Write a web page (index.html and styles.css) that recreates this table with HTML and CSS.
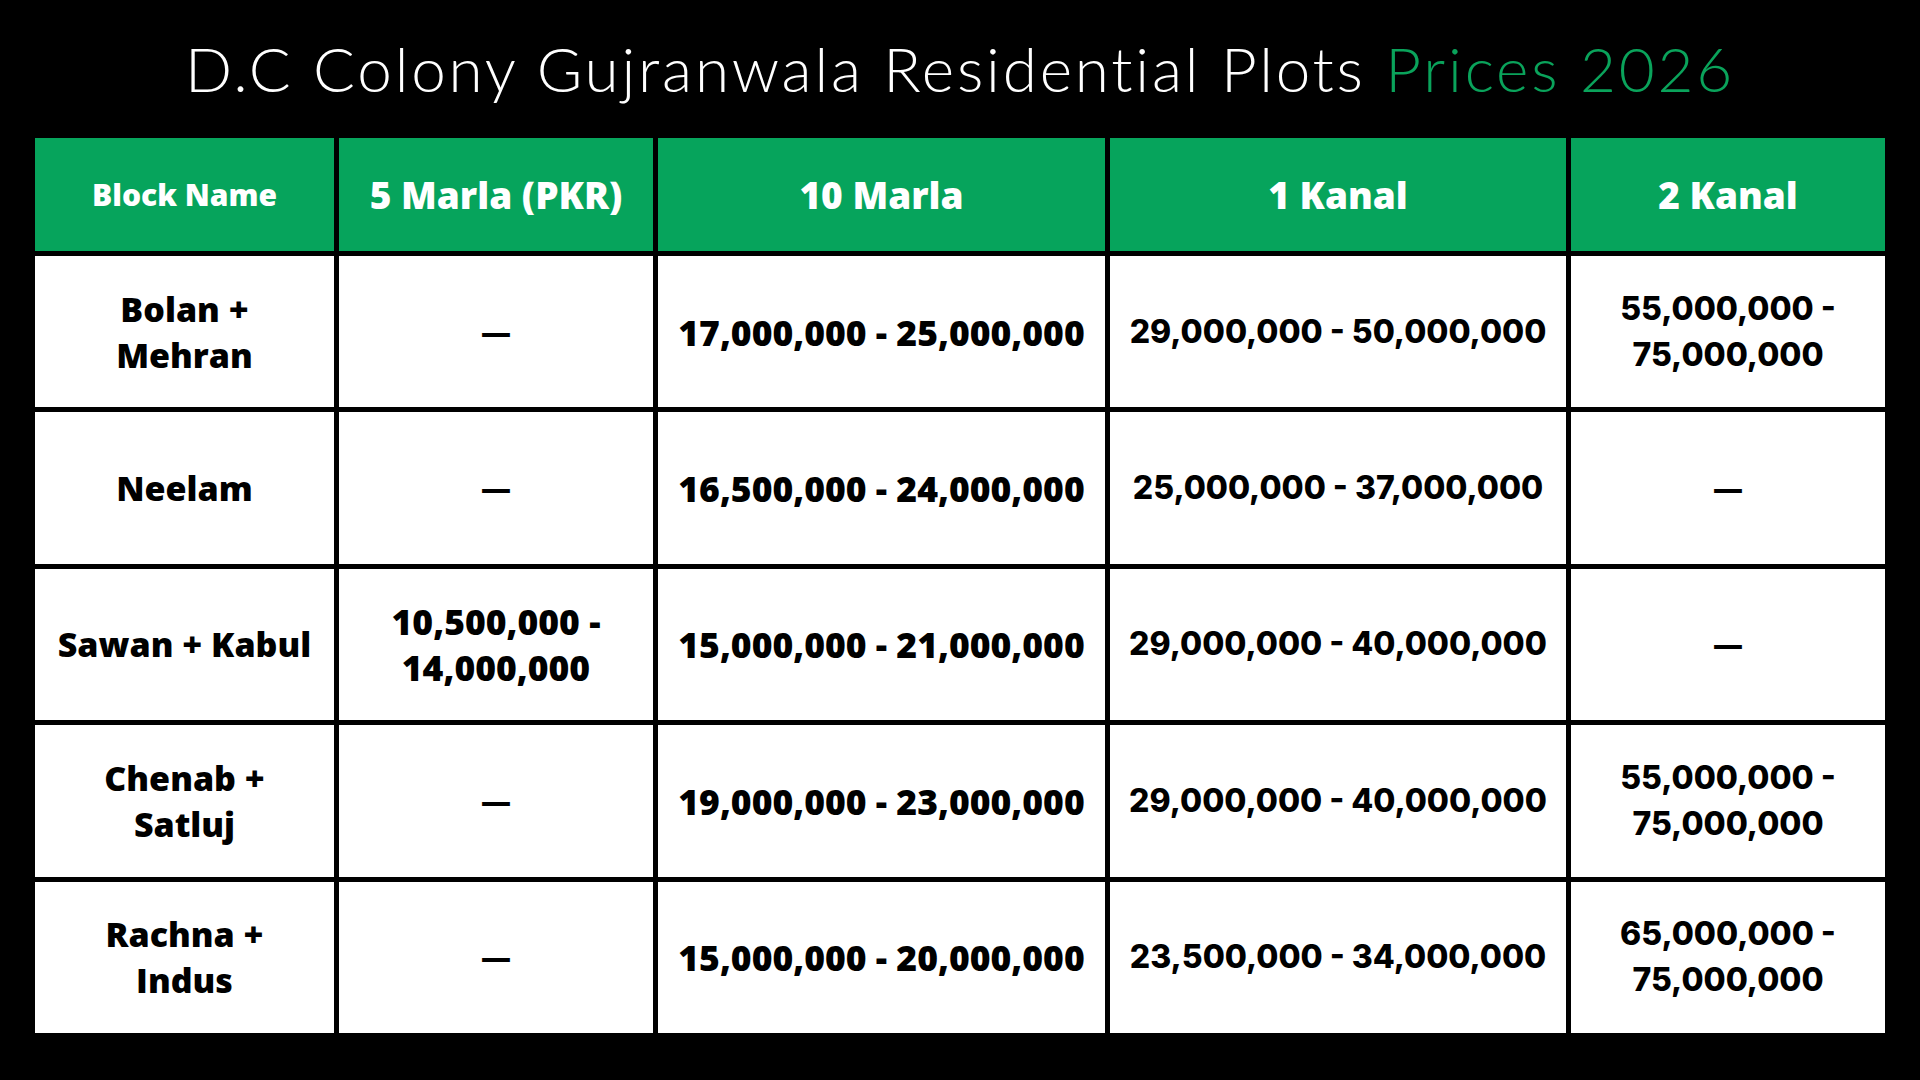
FILE: index.html
```html
<!DOCTYPE html>
<html lang="en">
<head>
<meta charset="utf-8">
<title>D.C Colony Gujranwala Residential Plots Prices 2026</title>
<link rel="stylesheet" href="styles.css">
</head>
<body>
<main class="page">
  <h1 class="title">D.C Colony Gujranwala Residential Plots <span class="accent">Prices 2026</span></h1>
  <div class="table">
    <div class="cell head head-sm">Block Name</div>
    <div class="cell head">5 Marla (PKR)</div>
    <div class="cell head">10 Marla</div>
    <div class="cell head">1 Kanal</div>
    <div class="cell head">2 Kanal</div>

    <div class="cell">Bolan +<br>Mehran</div>
    <div class="cell dash">—</div>
    <div class="cell num">17,000,000 - 25,000,000</div>
    <div class="cell alt">29,000,000 - 50,000,000</div>
    <div class="cell alt">55,000,000 -<br>75,000,000</div>

    <div class="cell">Neelam</div>
    <div class="cell dash">—</div>
    <div class="cell num">16,500,000 - 24,000,000</div>
    <div class="cell alt">25,000,000 - 37,000,000</div>
    <div class="cell dash">—</div>

    <div class="cell">Sawan + Kabul</div>
    <div class="cell num">10,500,000 -<br>14,000,000</div>
    <div class="cell num">15,000,000 - 21,000,000</div>
    <div class="cell alt">29,000,000 - 40,000,000</div>
    <div class="cell dash">—</div>

    <div class="cell">Chenab +<br>Satluj</div>
    <div class="cell dash">—</div>
    <div class="cell num">19,000,000 - 23,000,000</div>
    <div class="cell alt">29,000,000 - 40,000,000</div>
    <div class="cell alt">55,000,000 -<br>75,000,000</div>

    <div class="cell">Rachna +<br>Indus</div>
    <div class="cell dash">—</div>
    <div class="cell num">15,000,000 - 20,000,000</div>
    <div class="cell alt">23,500,000 - 34,000,000</div>
    <div class="cell alt">65,000,000 -<br>75,000,000</div>
  </div>
</main>
</body>
</html>
```
FILE: styles.css
```css
html, body {
  margin: 0;
  padding: 0;
  background: #000;
}

.page {
  width: 1920px;
  height: 1080px;
  display: flex;
  flex-direction: column;
  align-items: center;
}

.title {
  margin: 0;
  height: 138px;
  line-height: 136px;
  text-align: center;
  font-family: "Lato", "Open Sans", sans-serif;
  font-weight: 300;
  font-size: 62px;
  letter-spacing: 2.8px;
  color: #ffffff;
  white-space: nowrap;
}

.accent {
  color: #0aa35b;
}

.table {
  width: 1850px;
  height: 895px;
  display: grid;
  grid-template-columns: 299px 314px 447px 456px 1fr;
  grid-template-rows: 113px repeat(5, 1fr);
  gap: 5px;
}

.cell {
  background: #ffffff;
  color: #000000;
  display: flex;
  align-items: center;
  justify-content: center;
  text-align: center;
  font-family: "Open Sans", "Lato", sans-serif;
  font-weight: 800;
  font-size: 34px;
  line-height: 46px;
}

.num {
  font-size: 35.5px;
}

.head {
  background: #06a45c;
  color: #ffffff;
  font-size: 37px;
}

.head-sm {
  font-size: 30px;
}

.alt {
  font-family: "Inter", "Liberation Sans", sans-serif;
  font-weight: 800;
  font-size: 32px;
}

.dash {
  font-size: 30px;
}
```
